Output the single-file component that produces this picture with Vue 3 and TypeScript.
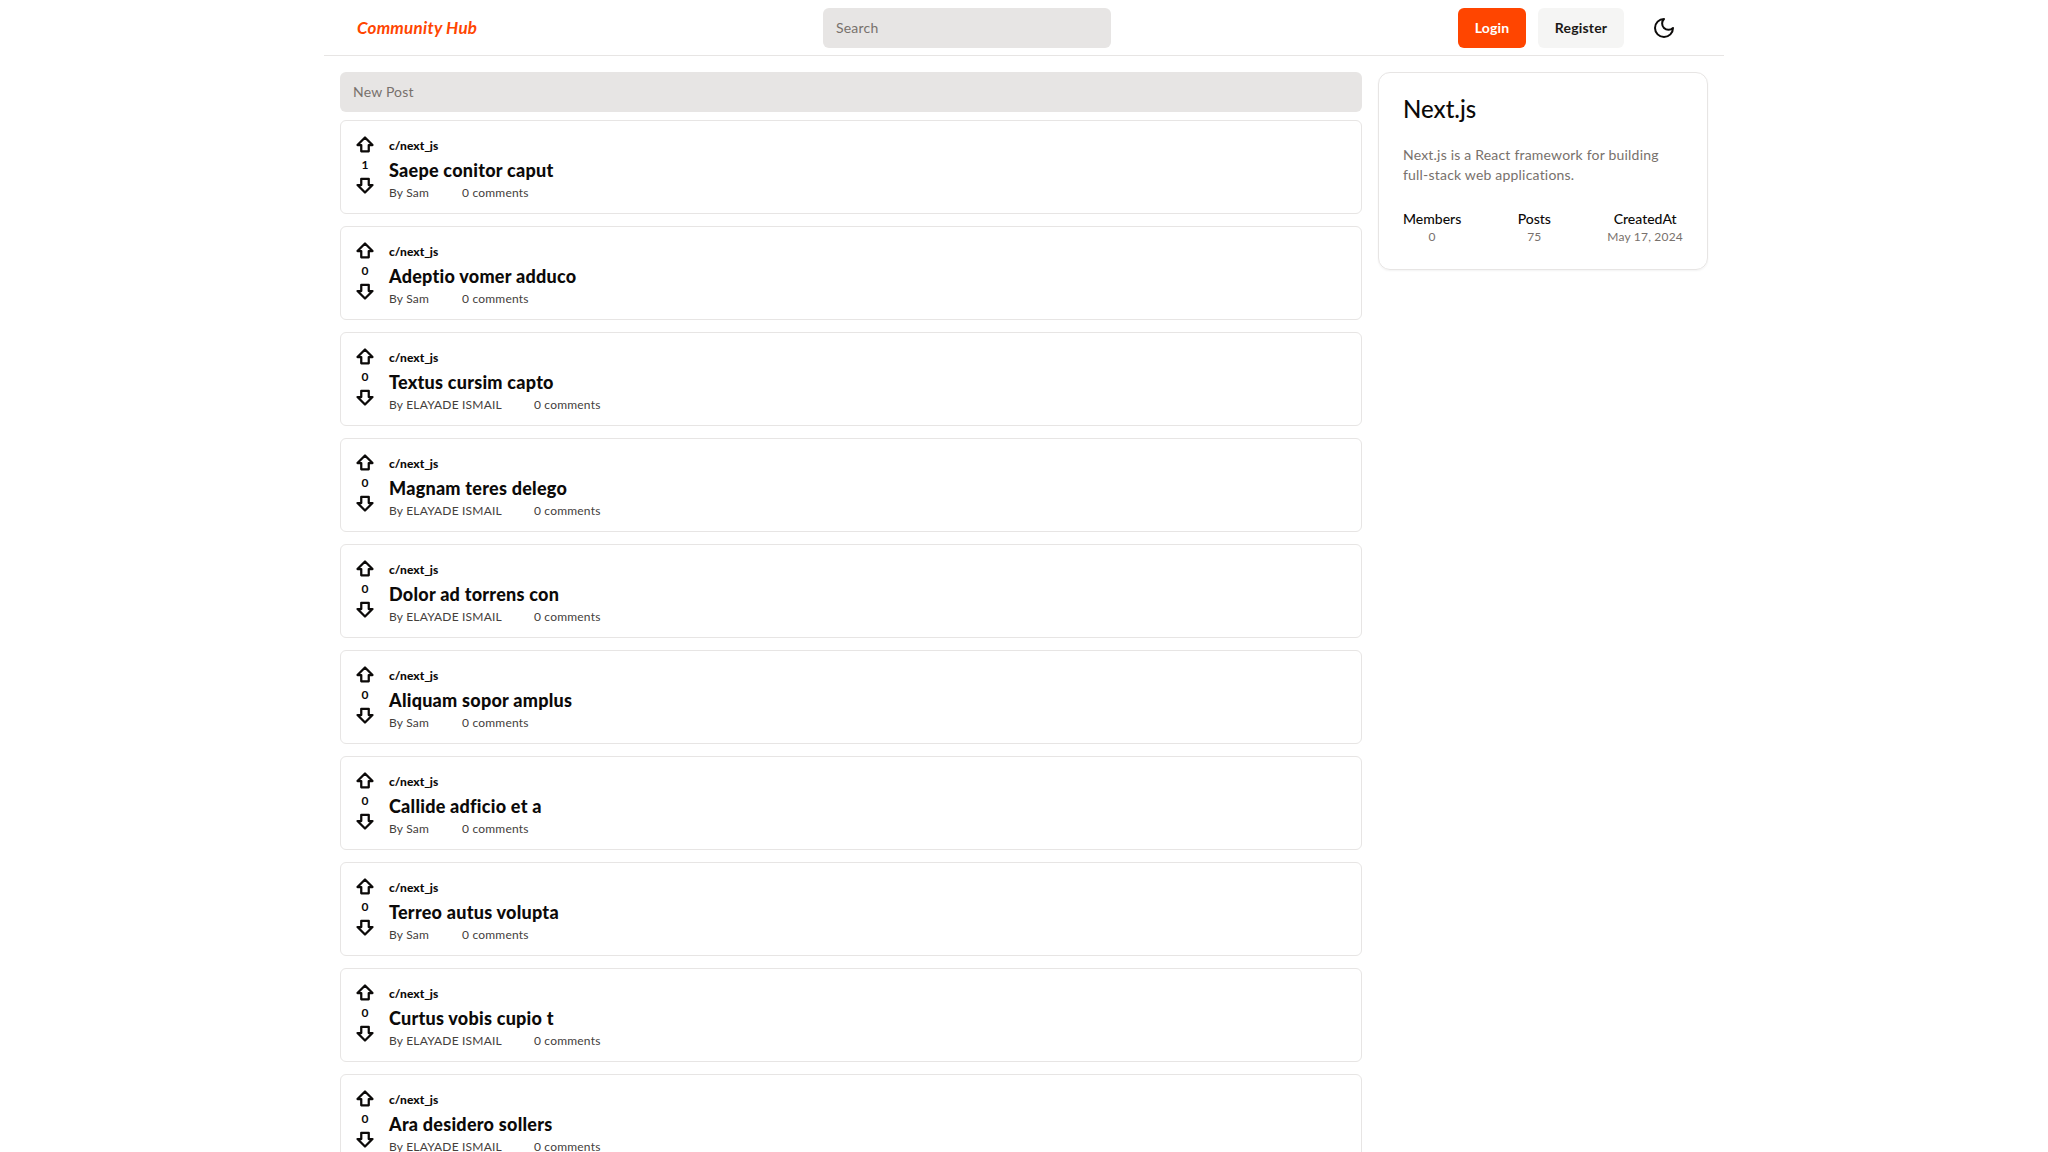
<script setup lang="ts">
interface Post { title: string; author: string; votes: number }
const posts: Post[] = [
  { title: 'Saepe conitor caput', author: 'Sam', votes: 1 },
  { title: 'Adeptio vomer adduco', author: 'Sam', votes: 0 },
  { title: 'Textus cursim capto', author: 'ELAYADE ISMAIL', votes: 0 },
  { title: 'Magnam teres delego', author: 'ELAYADE ISMAIL', votes: 0 },
  { title: 'Dolor ad torrens con', author: 'ELAYADE ISMAIL', votes: 0 },
  { title: 'Aliquam sopor amplus', author: 'Sam', votes: 0 },
  { title: 'Callide adficio et a', author: 'Sam', votes: 0 },
  { title: 'Terreo autus volupta', author: 'Sam', votes: 0 },
  { title: 'Curtus vobis cupio t', author: 'ELAYADE ISMAIL', votes: 0 },
  { title: 'Ara desidero sollers', author: 'ELAYADE ISMAIL', votes: 0 },
]
</script>

<template>
  <div class="shell">
    <header class="topbar">
      <div class="brand">Community Hub</div>
      <div class="search">Search</div>
      <div class="actions">
        <button class="btn login">Login</button>
        <button class="btn register">Register</button>
        <svg class="moon" viewBox="0 0 24 24" fill="none" stroke="#0c0a09" stroke-width="2" stroke-linecap="round" stroke-linejoin="round">
          <path d="M12 3a6 6 0 0 0 9 9 9 9 0 1 1-9-9Z" />
        </svg>
      </div>
    </header>
    <main class="layout">
      <section class="feed">
        <div class="newpost">New Post</div>
        <article v-for="p in posts" :key="p.title" class="card">
          <div class="votes">
            <svg class="arrow" viewBox="0 0 16 16"><path d="M8 2 14 8H11v5H5V8H2Z" fill="none" stroke="#0c0a09" stroke-width="1.800" stroke-linejoin="round" /></svg>
            <span class="count">{{ p.votes }}</span>
            <svg class="arrow" viewBox="0 0 16 16"><path d="M8 14 2 8H5V3h6V8h3Z" fill="none" stroke="#0c0a09" stroke-width="1.800" stroke-linejoin="round" /></svg>
          </div>
          <div class="body">
            <div class="community">c/next_js</div>
            <h2 class="title">{{ p.title }}</h2>
            <div class="meta"><span class="by">By {{ p.author }}</span><span>0 comments</span></div>
          </div>
        </article>
      </section>
      <aside class="side">
        <h1 class="side-title">Next.js</h1>
        <p class="side-desc">Next.js is a React framework for building full-stack web applications.</p>
        <div class="stats">
          <div class="stat"><div class="k">Members</div><div class="v">0</div></div>
          <div class="stat"><div class="k">Posts</div><div class="v">75</div></div>
          <div class="stat"><div class="k">CreatedAt</div><div class="v">May 17, 2024</div></div>
        </div>
      </aside>
    </main>
  </div>
</template>

<style>
html, body { margin: 0; background: #fff; overflow: hidden; height: 1152px; }
</style>

<style scoped>
.shell {
  width: 1400px;
  margin: 0 auto;
  font-family: Lato, "Open Sans", sans-serif;
  color: #0c0a09;
}
.topbar {
  height: 55px;
  border-bottom: 1px solid #e7e5e4;
  display: flex;
  justify-content: space-between;
  align-items: center;
  padding: 0 48px 0 33px;
}
.brand { color: #ff4500; font-weight: 700; font-style: italic; font-size: 17px; letter-spacing: 0.25px; width: 119px; white-space: nowrap; }
.search {
  width: 288px;
  box-sizing: border-box;
  height: 40px;
  line-height: 40px;
  background: #e7e5e4;
  border-radius: 6px;
  padding-left: 13px;
  font-size: 14px;
  letter-spacing: 0.2px;
  color: #78716c;
}
.actions { display: flex; align-items: center; gap: 12px; }
.btn {
  height: 40px;
  border: 0;
  border-radius: 6px;
  font: 700 14px Lato, sans-serif;
  letter-spacing: 0.2px;
  padding: 0;
}
.login { width: 68px; background: #ff4500; color: #fff; }
.register { width: 86px; background: #f5f5f4; color: #1c1917; }
.moon { width: 24px; height: 24px; margin-left: 16px; }
.layout {
  display: grid;
  grid-template-columns: 1022px 330px;
  gap: 16px;
  padding: 16px;
  align-items: start;
}
.feed { display: flex; flex-direction: column; gap: 12px; }
.newpost {
  height: 40px;
  line-height: 40px;
  background: #e7e5e4;
  border-radius: 6px;
  padding-left: 13px;
  font-size: 14px;
  letter-spacing: 0.2px;
  color: #78716c;
  margin-bottom: -4px;
}
.card {
  height: 94px;
  box-sizing: border-box;
  border: 1px solid #e7e5e4;
  border-radius: 6px;
  display: flex;
  padding: 13px 12px 0 12px;
  gap: 12px;
}
.votes { width: 24px; display: flex; flex-direction: column; align-items: center; padding-top: 1px; }
.arrow { width: 20px; height: 20px; display: block; }
.count { font-size: 12px; font-weight: 700; line-height: 20px; }
.body { display: flex; flex-direction: column; padding-top: 2px; }
.community { font-size: 12px; font-weight: 900; line-height: 20px; }
.title { margin: 0; font-size: 18px; font-weight: 900; line-height: 28px; color: #0c0a09; letter-spacing: 0.25px; }
.meta { font-size: 12px; line-height: 16px; color: #44403c; display: flex; gap: 32px; letter-spacing: 0.2px; padding-top: 1px; }
.by { min-width: 41px; }
.side {
  height: 198px;
  box-sizing: border-box;
  border: 1px solid #e7e5e4;
  border-radius: 12px;
  box-shadow: 0 1px 2px rgba(0,0,0,.05);
  padding: 20px 24px;
}
.side-title { margin: 0; font-size: 24px; font-weight: 500; line-height: 32px; }
.side-desc { margin: 20px 0 0; font-size: 14px; line-height: 20px; color: #78716c; letter-spacing: 0.2px; }
.stats { display: flex; justify-content: space-between; margin-top: 24px; text-align: center; }
.k { font-size: 14px; font-weight: 500; line-height: 20px; }
.v { font-size: 12px; line-height: 16px; color: #78716c; letter-spacing: 0.2px; }
</style>
